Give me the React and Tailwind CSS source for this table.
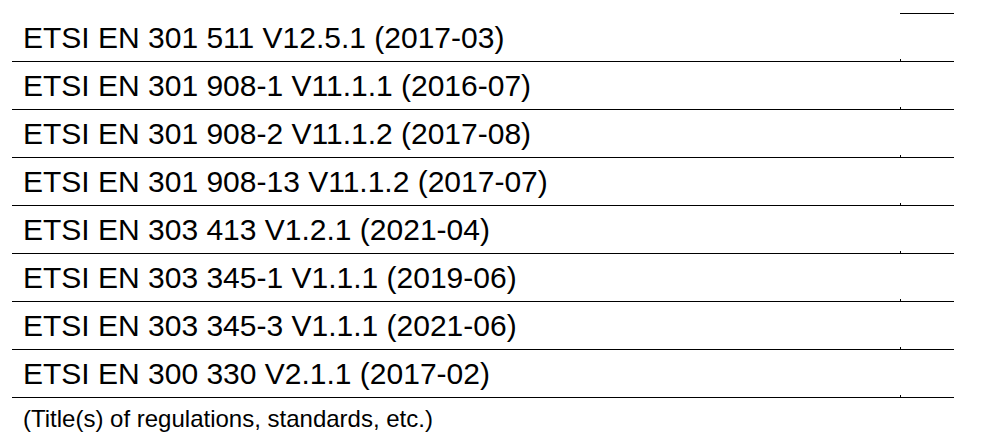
const rows = [
	"ETSI EN 301 511 V12.5.1 (2017-03)",
	"ETSI EN 301 908-1 V11.1.1 (2016-07)",
	"ETSI EN 301 908-2 V11.1.2 (2017-08)",
	"ETSI EN 301 908-13 V11.1.2 (2017-07)",
	"ETSI EN 303 413 V1.2.1 (2021-04)",
	"ETSI EN 303 345-1 V1.1.1 (2019-06)",
	"ETSI EN 303 345-3 V1.1.1 (2021-06)",
	"ETSI EN 300 330 V2.1.1 (2017-02)",
];

export default function App() {
	return (
		<div className="w-[1008px] h-[441px] bg-white text-black font-['Liberation_Sans',Arial,sans-serif] pt-[13px] pl-[12px]">
			<div className="w-[942px]">
				{/* top rule over the right column only */}
				<div className="flex">
					<div className="flex-1" />
					<div className="w-[54px] h-px bg-black" />
				</div>

				{rows.map((r) => (
					<div key={r} className="flex h-[48px] border-b border-black">
						<div className="flex-1 flex items-center pl-[11px] pt-px text-[30px] leading-none">
							{r}
						</div>
						<div className="w-[54px] flex items-end">
							<div className="w-px h-[2px] bg-black" />
						</div>
					</div>
				))}

				<div className="h-[40px] flex items-center pl-[11px] pt-[2px] text-[24px] leading-none">
					(Title(s) of regulations, standards, etc.)
				</div>
			</div>
		</div>
	);
}
